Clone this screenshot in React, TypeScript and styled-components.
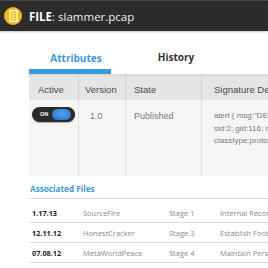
import React from "react";
import styled, { createGlobalStyle } from "styled-components";

const Global = createGlobalStyle`
  html, body { margin: 0; padding: 0; background: #fff; overflow: hidden; }
  body { width: 268px; height: 268px; }
`;

const Page = styled.div`
  width: 268px;
  height: 268px;
  overflow: hidden;
  background: #fff;
`;

const TopBar = styled.div`
  height: 31px;
  background: #2c2c2c;
  border-top: 1px solid #444;
  box-sizing: border-box;
  display: flex;
  align-items: center;
  padding-left: 4px;
  gap: 7px;
  box-shadow: 0 1px 2px rgba(0,0,0,0.25);
`;

const FileIcon = styled.div`
  width: 18px;
  height: 18px;
  border-radius: 50%;
  background: #f5b90f;
  display: flex;
  align-items: center;
  justify-content: center;
`;

const Title = styled.div`
  font-family: "Open Sans", sans-serif;
  font-size: 11.5px;
  color: #ececec;
  white-space: nowrap;
  padding-top: 1px;
  b { font-weight: 700; color: #fff; }
`;

const Content = styled.div`
  padding-left: 29px;
`;

const Tabs = styled.div`
  display: flex;
  height: 43px;
  width: 400px;
`;

const Tab = styled.div<{ $active?: boolean; $w: number; $pl: number }>`
  width: ${(p) => p.$w}px;
  display: flex;
  align-items: flex-end;
  justify-content: center;
  padding-left: ${(p) => p.$pl}px;
  padding-bottom: ${(p) => (p.$active ? 4 : 10)}px;
  box-sizing: border-box;
  font-family: "Open Sans", sans-serif;
  font-weight: 700;
  font-size: 10px;
  color: ${(p) => (p.$active ? "#3a9ad9" : "#333")};
  border-bottom: ${(p) => (p.$active ? "5px solid #3a9ad9" : "none")};
`;

const Table = styled.div`
  display: grid;
  grid-template-columns: 50px 47px 76px 220px;
  width: 393px;
  font-family: "Liberation Sans", Arial, sans-serif;
`;

const HeadCell = styled.div<{ $pl: number }>`
  height: 26px;
  background: linear-gradient(#d6d6d6, #e5e5e5 3px, #e5e5e5);
  border-right: 1px solid #d2d2d2;
  box-sizing: border-box;
  display: flex;
  align-items: center;
  padding-left: ${(p) => p.$pl}px;
  padding-top: 5px;
  color: #4a4a4a;
  font-size: 9.5px;
  white-space: nowrap;
`;

const BodyCell = styled.div<{ $pl: number }>`
  height: 76px;
  background: #f5f5f5;
  border-right: 1px solid #e2e2e2;
  box-sizing: border-box;
  padding: 10px 0 0 ${(p) => p.$pl}px;
  display: flex;
  flex-direction: column;
  align-items: flex-start;
  color: #7a7a7a;
  font-size: 9px;
  line-height: 12.5px;
  white-space: nowrap;
`;

const Toggle = styled.div`
  width: 43px;
  height: 15px;
  border-radius: 8px;
  background: #2a2a2a;
  box-shadow: 0 1px 1px rgba(0,0,0,0.3);
  display: flex;
  align-items: center;
  padding: 0 4px 0 8px;
  box-sizing: border-box;
  justify-content: space-between;
  margin-top: -3px;
`;

const ToggleLabel = styled.span`
  font-family: "Liberation Sans", Arial, sans-serif;
  font-size: 5.5px;
  font-weight: 700;
  color: #fff;
`;

const Knob = styled.span`
  width: 19px;
  height: 11px;
  border-radius: 6px;
  background: radial-gradient(ellipse at 50% 40%, #4fa3ef, #2a78cf 80%);
`;

const SigLine = styled.div`
  color: #7a7a7a;
  font-size: 8px;
  line-height: 12.5px;
`;

const SectionTitle = styled.div`
  font-family: "Open Sans", sans-serif;
  font-weight: 700;
  font-size: 8.2px;
  color: #3a9ad9;
  margin-top: 5px;
  padding-left: 1px;
  height: 18px;
  border-bottom: 1px solid #d8d8d8;
  box-sizing: border-box;
  width: 400px;
  line-height: 16px;
`;

const FileList = styled.div`
  padding-top: 4px;
`;

const FileRow = styled.div`
  display: grid;
  grid-template-columns: 51px 86px 51px 100px;
  height: 20px;
  align-items: center;
  border-bottom: 1px solid #dedede;
  box-sizing: border-box;
  width: 400px;
  padding-left: 3px;
  padding-top: 1px;
  white-space: nowrap;
  font-family: "Open Sans", sans-serif;
  font-size: 7.5px;
  color: #8a8a8a;
  font-weight: 400;
`;

const DateCell = styled.span`
  font-weight: 700;
  color: #222;
  font-size: 7.3px;
`;

const files = [
  ["1.17.13", "SourceFire", "Stage 1", "Internal Reconnaissance"],
  ["12.11.12", "HonestCracker", "Stage 3", "Establish Foothold"],
  ["07.08.12", "MetaWorldPeace", "Stage 4", "Maintain Persistence"],
];

export default function App() {
  return (
    <Page>
      <Global />
      <TopBar>
        <FileIcon>
          <svg width="9" height="12" viewBox="0 0 9 12">
            <rect x="1" y="0.75" width="7" height="10.5" fill="none" stroke="#fff" strokeWidth="1.3" />
            <line x1="2.8" y1="3.5" x2="6.2" y2="3.5" stroke="#fff" strokeWidth="1" />
            <line x1="2.8" y1="6" x2="6.2" y2="6" stroke="#fff" strokeWidth="1" />
            <line x1="2.8" y1="8.5" x2="6.2" y2="8.5" stroke="#fff" strokeWidth="1" />
          </svg>
        </FileIcon>
        <Title>
          <b>FILE</b>: slammer.pcap
        </Title>
      </TopBar>
      <Content>
        <Tabs>
          <Tab $active $w={82} $pl={12}>Attributes</Tab>
          <Tab $w={130} $pl={0}>History</Tab>
        </Tabs>
        <Table>
          <HeadCell $pl={9}>Active</HeadCell>
          <HeadCell $pl={6}>Version</HeadCell>
          <HeadCell $pl={8}>State</HeadCell>
          <HeadCell $pl={12}>Signature Description</HeadCell>
          <BodyCell $pl={3}>
            <Toggle>
              <ToggleLabel>ON</ToggleLabel>
              <Knob />
            </Toggle>
          </BodyCell>
          <BodyCell $pl={11}>1.0</BodyCell>
          <BodyCell $pl={8}>Published</BodyCell>
          <BodyCell $pl={12}>
            <SigLine>alert ( msg:"DECODE_NOT_IPV4_DGRAM";</SigLine>
            <SigLine>sid:2; gid:116; rev:1; metadata:rule;</SigLine>
            <SigLine>classtype:protocol-command-decode; )</SigLine>
          </BodyCell>
        </Table>
        <SectionTitle>Associated Files</SectionTitle>
        <FileList>
          {files.map((f) => (
            <FileRow key={f[0]}>
              <DateCell>{f[0]}</DateCell>
              <span>{f[1]}</span>
              <span>{f[2]}</span>
              <span>{f[3]}</span>
            </FileRow>
          ))}
        </FileList>
      </Content>
    </Page>
  );
}
